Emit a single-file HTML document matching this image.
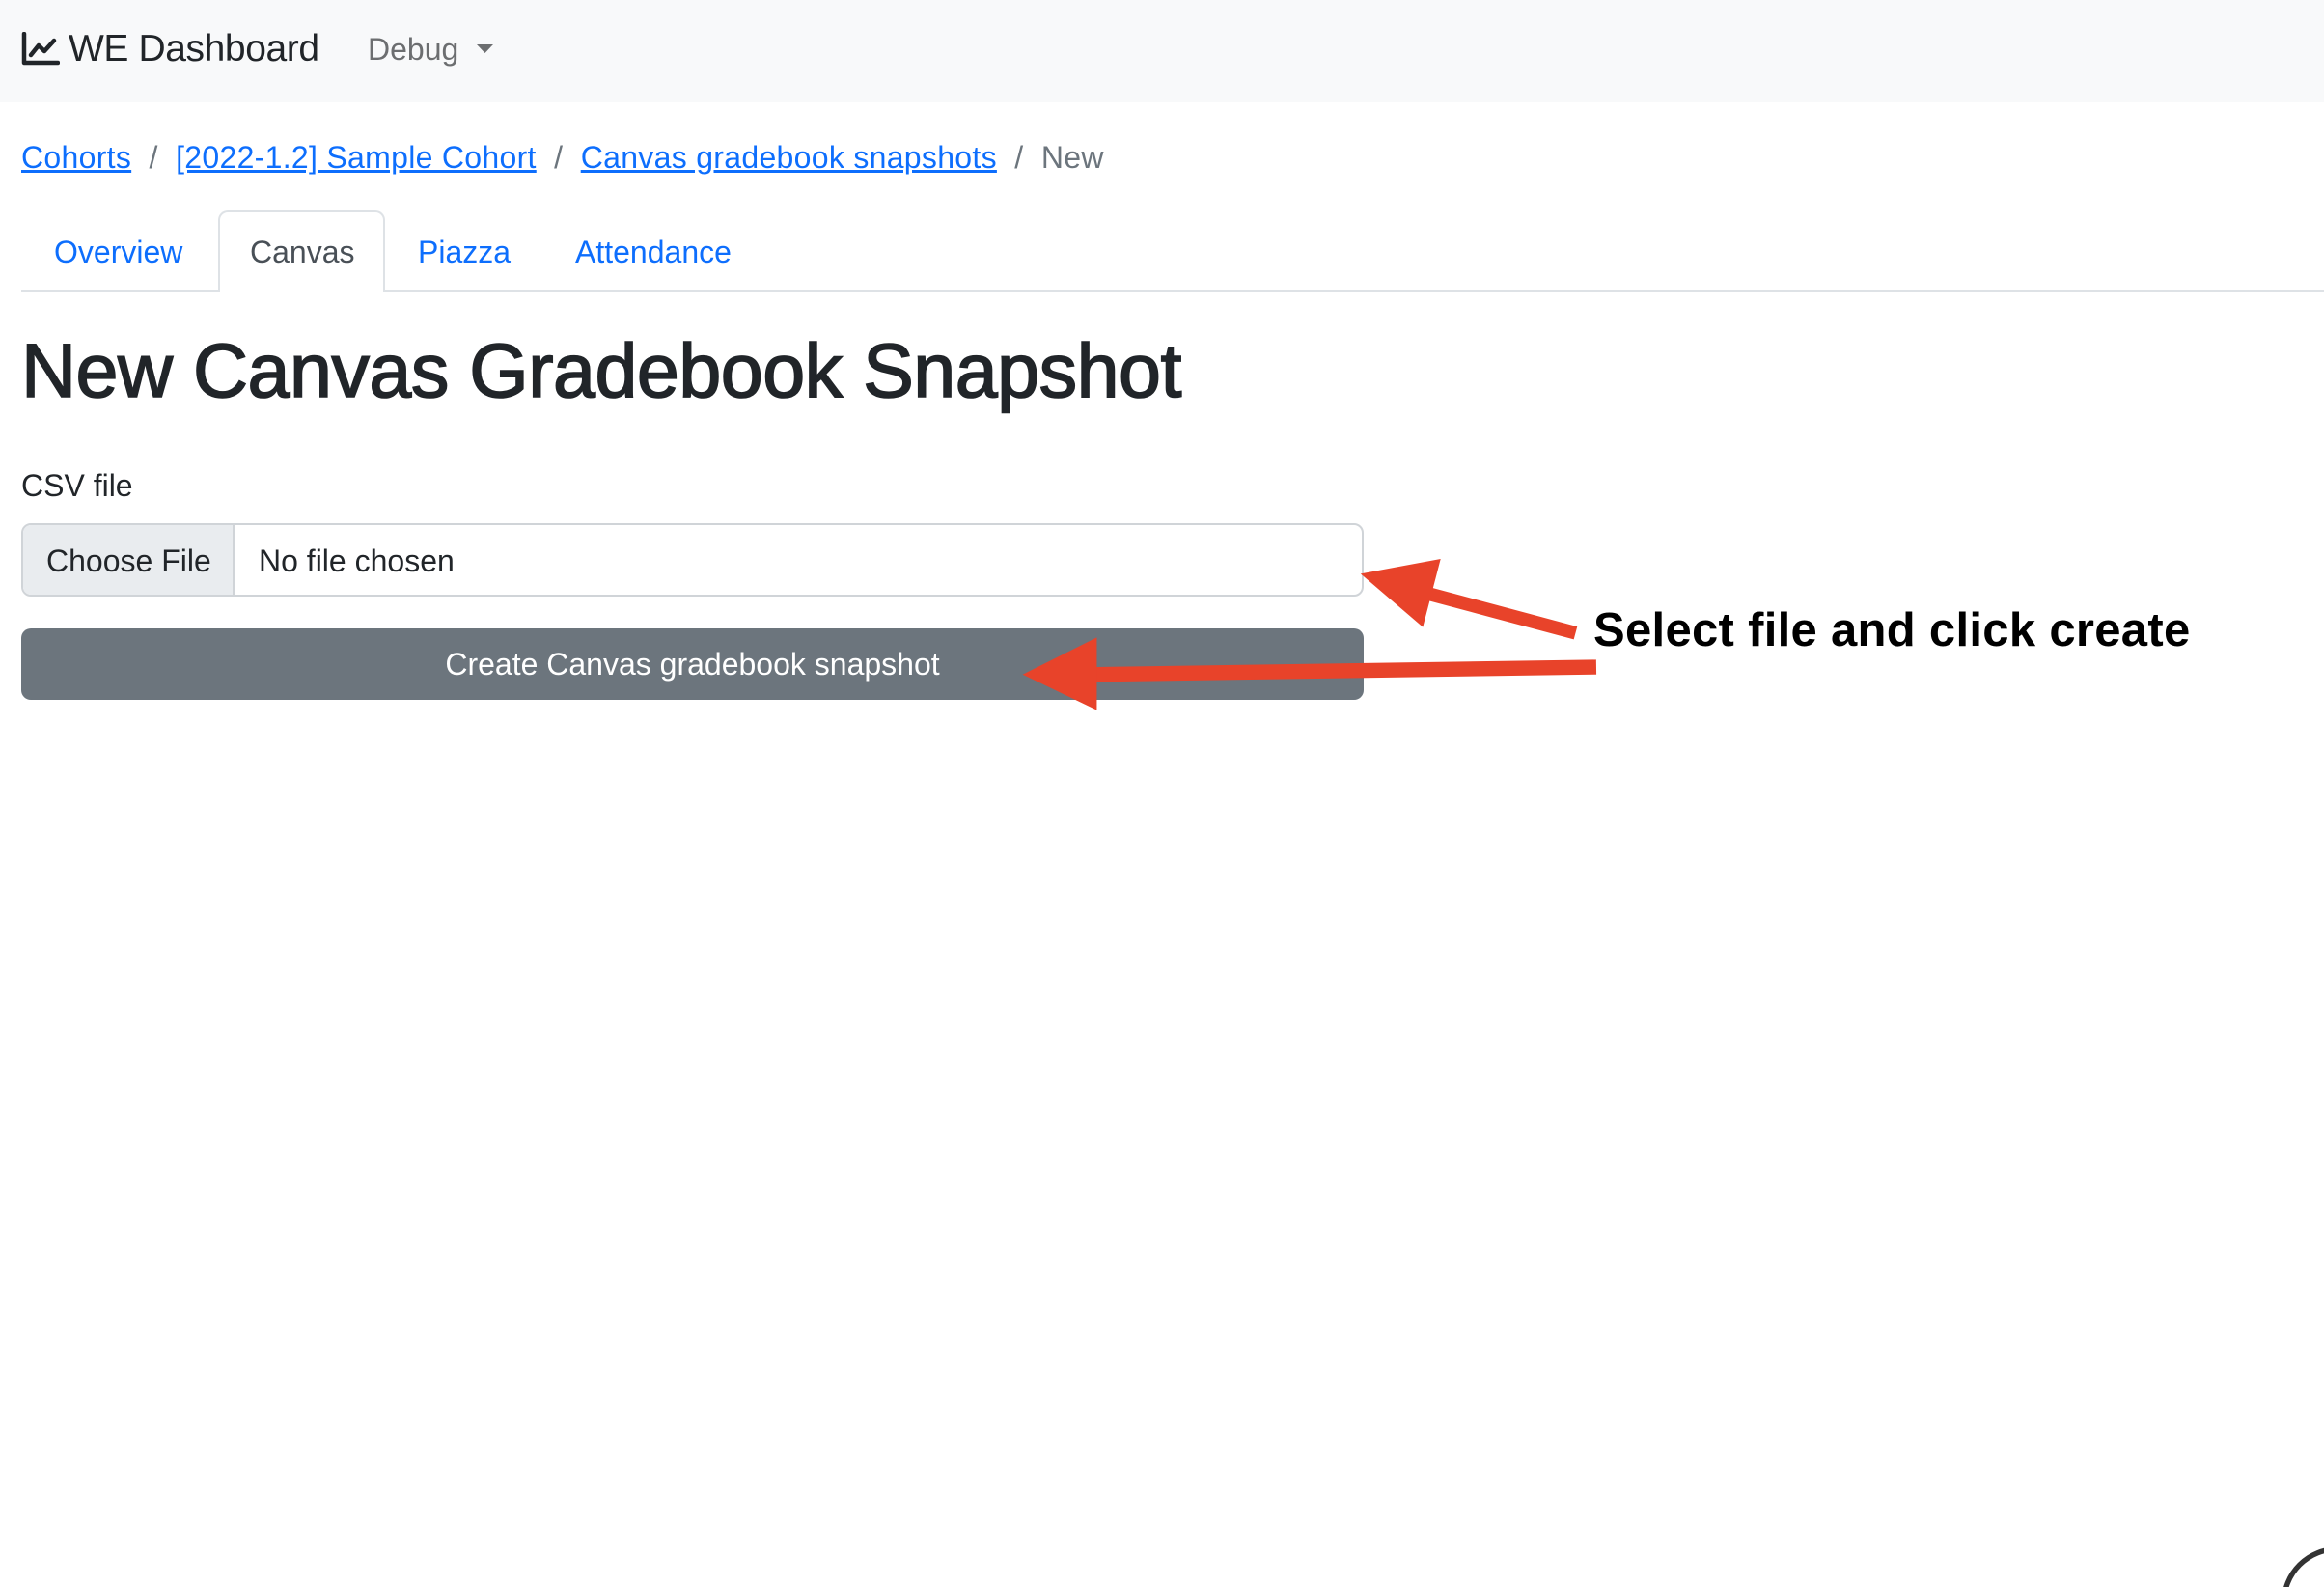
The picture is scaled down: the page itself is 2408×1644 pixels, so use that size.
<!DOCTYPE html>
<html><head><meta charset="utf-8"><style>
*{box-sizing:border-box;margin:0;padding:0}
body{width:2408px;height:1644px;overflow:hidden;background:#fff;font-family:"Liberation Sans",Arial,sans-serif;color:#212529;position:relative}
.nav{position:absolute;left:0;top:0;width:2408px;height:106px;background:#f8f9fa}
.abs{position:absolute;white-space:nowrap}
a{color:#0d6efd;text-decoration:underline}
</style></head><body>
<div class="nav"></div>
<svg class="abs" style="left:22px;top:33px" width="40" height="36" viewBox="0 0 40 36"><path d="M3 2V32H38" fill="none" stroke="#212529" stroke-width="4.5" stroke-linecap="round" stroke-linejoin="round"/><path d="M10 24L18 14L24 20L34 9" fill="none" stroke="#212529" stroke-width="4.5" stroke-linecap="round" stroke-linejoin="round"/></svg>
<div class="abs" style="left:71px;top:29px;font-size:39px;letter-spacing:-0.4px;color:#212529">WE Dashboard</div>
<div class="abs" style="left:381px;top:33px;font-size:32px;color:#6c6e70">Debug</div>
<svg class="abs" style="left:494px;top:46px" width="17" height="10"><path d="M0 0H17L8.5 9Z" fill="#6c6e70"/></svg>
<div class="abs" style="left:22px;top:145px;font-size:32px;letter-spacing:0.3px;color:#6c757d"><a href="#">Cohorts</a>&nbsp; / &nbsp;<a href="#">[2022-1.2] Sample Cohort</a>&nbsp; / &nbsp;<a href="#">Canvas gradebook snapshots</a>&nbsp; / &nbsp;New</div>
<div class="abs" style="left:22px;top:300px;width:2386px;height:2px;background:#dee2e6"></div>
<div class="abs" style="left:226px;top:218px;width:173px;height:84px;border:2px solid #dee2e6;border-bottom:none;border-radius:10px 10px 0 0;background:#fff"></div>
<div class="abs" style="left:56px;top:243px;font-size:32px;color:#0d6efd">Overview</div>
<div class="abs" style="left:259px;top:243px;font-size:32px;color:#495057">Canvas</div>
<div class="abs" style="left:433px;top:243px;font-size:32px;color:#0d6efd">Piazza</div>
<div class="abs" style="left:596px;top:243px;font-size:32px;color:#0d6efd">Attendance</div>
<div class="abs" style="left:22px;top:338px;font-size:79px;color:#212529;-webkit-text-stroke:1.6px #212529;letter-spacing:-0.5px">New Canvas Gradebook Snapshot</div>
<div class="abs" style="left:22px;top:485px;font-size:32px">CSV file</div>
<div class="abs" style="left:22px;top:542px;width:1391px;height:76px;border:2px solid #d0d4d8;border-radius:10px;overflow:hidden;background:#fff">
<div style="position:absolute;left:0;top:0;width:219px;height:100%;background:#e9ecef;border-right:2px solid #d0d4d8"></div>
<div class="abs" style="left:24px;top:19px;font-size:32px">Choose File</div>
<div class="abs" style="left:244px;top:19px;font-size:32px">No file chosen</div>
</div>
<div class="abs" style="left:22px;top:651px;width:1391px;height:74px;background:#6c757d;border-radius:10px;color:#fff;font-size:32px;text-align:center;line-height:74px">Create Canvas gradebook snapshot</div>
<div class="abs" style="left:1651px;top:625px;font-size:49px;letter-spacing:0.3px;font-weight:bold;color:#000">Select file and click create</div>
<svg class="abs" style="left:0;top:0" width="2408" height="1644" viewBox="0 0 1568 1070.5">
<line x1="1063" y1="427" x2="962" y2="400" stroke="#e8432a" stroke-width="9"/>
<polygon points="918,387 972,377 960,423" fill="#e8432a"/>
<line x1="1077" y1="450" x2="735" y2="455" stroke="#e8432a" stroke-width="10"/>
<polygon points="690,455 740,430 740,479" fill="#e8432a"/>
<circle cx="1577" cy="1081" r="36" fill="none" stroke="#333" stroke-width="3.5"/>
</svg>
</body></html>
